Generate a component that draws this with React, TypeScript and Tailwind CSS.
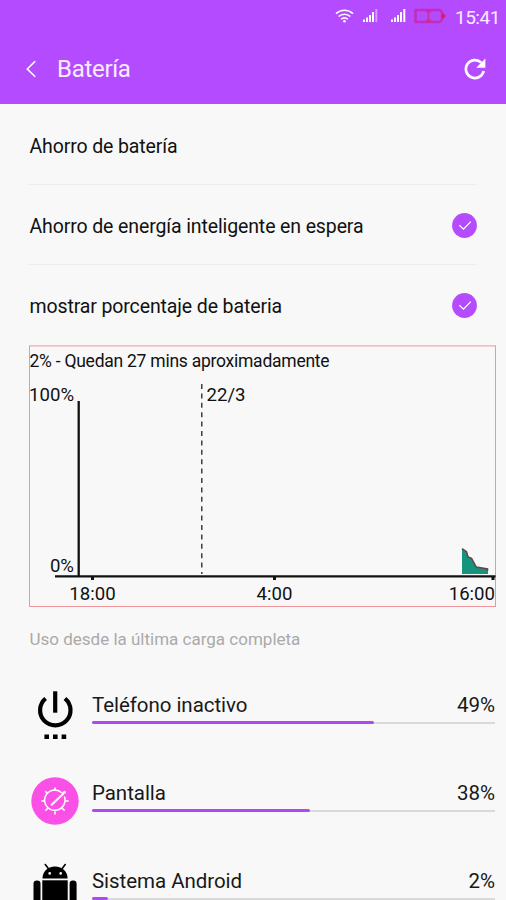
import type { ReactNode } from "react";

type Setting = {
  label: string;
  checked?: boolean;
};

type Usage = {
  name: string;
  percent: string;
  bar: number;
  icon: ReactNode;
};

const settings: Setting[] = [
  { label: "Ahorro de batería" },
  { label: "Ahorro de energía inteligente en espera", checked: true },
  { label: "mostrar porcentaje de bateria", checked: true },
];

function WifiIcon() {
  return (
    <svg width="19" height="14" viewBox="0 0 19 14" fill="none" stroke="#fff" strokeWidth="1.6">
      <path d="M1 4.6C5.9.1 13.1.1 18 4.6" />
      <path d="M3.6 7.5c3.5-3.1 8.3-3.1 11.8 0" />
      <path d="M6.2 10.2c2-1.7 4.6-1.7 6.6 0" />
      <circle cx="9.5" cy="12.3" r="1.3" fill="#fff" stroke="none" />
    </svg>
  );
}

function SignalIcon({ weak }: { weak?: boolean }) {
  return (
    <svg width="15" height="14" viewBox="0 0 15 14" fill="#fff">
      <rect x="0" y="10.5" width="2" height="2.5" />
      <rect x="3" y="8.5" width="2" height="4.5" />
      <rect x="6" y="6" width="2" height="7" />
      <rect x="9" y="3" width="2" height="10" />
      <rect x="12.3" y="0" width="2" height="13" opacity={weak ? 0.45 : 1} />
    </svg>
  );
}

function BatteryIcon() {
  return (
    <svg width="33" height="16" viewBox="0 0 33 16" fill="none" stroke="#c22cc0" strokeWidth="2.6">
      <path d="M2.5 2h23c2 0 3.5 2 4 4v4c-.5 2-2 4-4 4h-23z" />
      <path d="M13 3.6h5M15.5 4v8.5M13 12.5h5" stroke="#cf2a90" strokeWidth="1.4" />
      <circle cx="30" cy="8" r="2.3" fill="#dc1f62" stroke="none" />
    </svg>
  );
}

function RefreshIcon() {
  return (
    <svg width="22" height="22" viewBox="0 0 22 22" fill="none">
      <path d="M17.2 4.6A9 9 0 1 0 19.7 13" stroke="#fff" strokeWidth="2.7" />
      <path d="M21.4.6v9.2h-9.2z" fill="#fff" />
    </svg>
  );
}

function CheckIcon() {
  return (
    <svg width="25" height="25" viewBox="0 0 25 25" fill="none">
      <circle cx="12.5" cy="12.5" r="12.4" fill="#b44bff" />
      <path d="M7.2 12.1l4.3 4.1 7.3-7.6" stroke="#fff" strokeWidth="1.3" />
    </svg>
  );
}

function PowerIcon() {
  return (
    <svg width="48" height="51" viewBox="0 0 48 51" fill="none">
      <path d="M14.6 9.5a15.2 15.2 0 1 0 19.4 0" stroke="#000" strokeWidth="4.2" />
      <path d="M24.2 2.3v21.4" stroke="#000" strokeWidth="4.2" />
      <path d="M13.4 45.4H18V50h-4.6zM22 45.4h4.6V50H22zM30.6 45.4h4.6V50h-4.6z" fill="#000" />
    </svg>
  );
}

function ScreenIcon() {
  const rays = [0, 45, 90, 135, 180, 225, 270, 315];
  return (
    <svg width="48" height="48" viewBox="0 0 48 48" fill="none">
      <circle cx="24" cy="24" r="23.7" fill="#fb50e6" />
      <g stroke="#fff" strokeWidth="1.5">
        <path d="M30.8 15.7A10.2 10.2 0 1 0 33.4 19.6" />
        {rays.map((angle) => (
          <path key={angle} d="M24 13.8v-3.4" transform={`rotate(${angle} 24 24)`} />
        ))}
      </g>
      <path d="M20.2 28.3L34.6 14.5" stroke="#fff" strokeWidth="2" />
    </svg>
  );
}

function AndroidIcon() {
  return (
    <svg width="48" height="48" viewBox="0 3 48 48" className="overflow-visible">
      <path d="M11.5 16.5C11.5 9.5 16.5 4.5 24 4.5s12.6 5 12.6 12z" />
      <path d="M17.5 6.7L14.3 2.5M31 6.7l3.2-4.2" stroke="#000" strokeWidth="1.6" strokeLinecap="round" />
      <circle cx="18.7" cy="11.4" r="1.3" fill="#f8f8f8" />
      <circle cx="29.7" cy="11.4" r="1.3" fill="#f8f8f8" />
      <rect x="11.3" y="18.3" width="25.4" height="34" />
      <rect x="2.5" y="18.5" width="7" height="30" rx="3.3" />
      <rect x="38.6" y="18.5" width="7" height="30" rx="3.3" />
    </svg>
  );
}

const usages: Usage[] = [
  { name: "Teléfono inactivo", percent: "49%", bar: 70, icon: <PowerIcon /> },
  { name: "Pantalla", percent: "38%", bar: 54, icon: <ScreenIcon /> },
  { name: "Sistema Android", percent: "2%", bar: 4, icon: <AndroidIcon /> },
];

function StatusBar() {
  return (
    <div className="flex h-9 items-center pl-[335px]">
      <div className="flex items-center pb-1">
        <WifiIcon />
        <div className="ml-[9px] flex gap-[13px]">
          <SignalIcon weak />
          <SignalIcon />
        </div>
        <div className="ml-[7px]">
          <BatteryIcon />
        </div>
      </div>
      <span className="ml-[9px] text-[19px] leading-9 tracking-[-0.5px] text-white/90">15:41</span>
    </div>
  );
}

function Header() {
  return (
    <header className="h-[104px] shrink-0 bg-[#b44bff]">
      <StatusBar />
      <div className="flex h-[66px] items-center pl-[26px] pr-5">
        <svg width="10" height="17" viewBox="0 0 10 17" fill="none" stroke="#fff" strokeWidth="1.6">
          <path d="M9.2.2L1.3 8l7.9 7.8" />
        </svg>
        <h1 className="ml-[21px] flex-1 text-[24px] tracking-[-0.3px] text-white/90">Batería</h1>
        <RefreshIcon />
      </div>
    </header>
  );
}

// Historial de la batería
function BatteryChart() {
  return (
    <svg
      width="467"
      height="262"
      viewBox="29 345 467 262"
      className="ml-[29px] block"
      fill="#111"
      fontSize="18.6"
    >
      <rect x="29.5" y="345.9" width="466" height="260.6" fill="none" stroke="#f0959b" />
      <text x="29.5" y="367.3" fontSize="17.5" letterSpacing="-0.25">
        2% - Quedan 27 mins aproximadamente
      </text>
      <text x="74" y="401" textAnchor="end">100%</text>
      <text x="206.5" y="401">22/3</text>
      <text x="74" y="572" textAnchor="end">0%</text>
      <path d="M201.8 384v190" stroke="#222" strokeWidth="1.3" strokeDasharray="5 4.4" />
      <path d="M78.7 401v175" stroke="#111" strokeWidth="2.3" />
      <path d="M462 548.5l4.5 3 2.5 6 3 1 4.5 8.5 11.5 2v5h-26z" fill="#16937f" />
      <path d="M462 548.7l4.5 3 1.5 5.3 3.5 1.3 4.8 8.7 11.2 2v2" fill="none" stroke="#66434a" strokeWidth="1.5" />
      <path d="M55 576.3h440.5" stroke="#111" strokeWidth="2.3" />
      <path d="M92.5 577v3M274.5 577v3M493 577v3" stroke="#111" strokeWidth="3" />
      <text x="92.5" y="600" textAnchor="middle">18:00</text>
      <text x="274.5" y="600" textAnchor="middle">4:00</text>
      <text x="495" y="600" textAnchor="end">16:00</text>
    </svg>
  );
}

function UsageRow({ usage }: { usage: Usage }) {
  return (
    <li className="flex h-[88px] gap-[13px] pl-[31px] pr-[11px]">
      <div className="w-12 shrink-0">{usage.icon}</div>
      <div className="flex-1 pt-px">
        <div className="mb-px flex h-[30px] items-center justify-between text-[20.5px] leading-[30px] tracking-[-0.05px] text-[#181818]">
          <span>{usage.name}</span>
          <span>{usage.percent}</span>
        </div>
        <div className="flex h-[3px] items-center">
          <div className="h-[3px] rounded-full bg-[#ae48f5]" style={{ width: `${usage.bar}%` }} />
          <div className="h-0.5 flex-1 bg-[#d9d9d9]" />
        </div>
      </div>
    </li>
  );
}

export default function App() {
  return (
    <div className="flex h-[900px] w-[506px] flex-col overflow-hidden bg-[#f8f8f8] font-[Roboto,sans-serif]">
      <Header />
      <ul className="h-[241px] shrink-0 px-[29px] pt-px">
        {settings.map((item) => (
          <li
            key={item.label}
            className="flex h-20 items-center justify-between border-b border-[#ececec] pt-px last:border-b-0 last:pt-0"
          >
            <span className="pl-[0.5px] pt-[3px] text-[19.5px] tracking-[-0.12px] text-[#111]">{item.label}</span>
            {item.checked && <CheckIcon />}
          </li>
        ))}
      </ul>
      <div className="shrink-0">
        <BatteryChart />
      </div>
      <p className="h-[82px] shrink-0 pl-[29.5px] pt-5 text-[17px] leading-6 text-[#aaa]">
        Uso desde la última carga completa
      </p>
      <ul className="shrink-0">
        {usages.map((usage) => (
          <UsageRow key={usage.name} usage={usage} />
        ))}
      </ul>
    </div>
  );
}
